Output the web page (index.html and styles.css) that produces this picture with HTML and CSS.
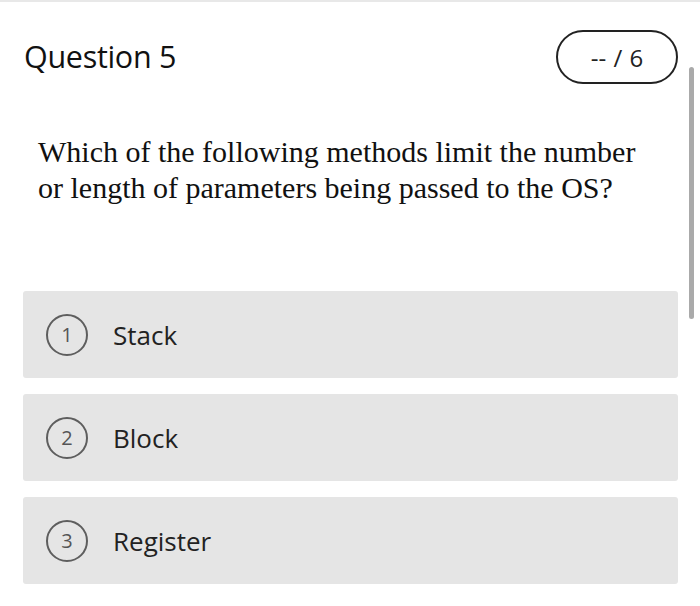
FILE: index.html
```html
<!DOCTYPE html>
<html>
<head>
<meta charset="utf-8">
<link rel="stylesheet" href="styles.css">
</head>
<body>
<div class="page">
  <header class="head">
    <h1 class="title">Question 5</h1>
    <div class="score">-- / 6</div>
  </header>
  <p class="question">Which of the following methods limit the number or length of parameters being passed to the OS?</p>
  <div class="options">
    <div class="option"><span class="num">1</span><span class="label">Stack</span></div>
    <div class="option"><span class="num">2</span><span class="label">Block</span></div>
    <div class="option"><span class="num">3</span><span class="label">Register</span></div>
  </div>
  <div class="scrollbar"></div>
</div>
</body>
</html>
```
FILE: styles.css
```css
html, body {
  margin: 0;
  padding: 0;
  background: #fff;
}
.page {
  position: relative;
  width: 700px;
  height: 606px;
  border-top: 2px solid #e8e8e8;
  box-sizing: border-box;
  padding: 28px 22px 0 23px;
  font-family: "Open Sans", "Noto Sans", sans-serif;
}
.head {
  display: flex;
  justify-content: space-between;
  align-items: center;
  height: 54px;
}
.title {
  margin: 0 0 3px 1px;
  font-size: 30.5px;
  font-weight: 400;
  color: #111;
  letter-spacing: -0.3px;
}
.score {
  width: 118px;
  height: 50px;
  border: 2px solid #222;
  border-radius: 27px;
  display: flex;
  align-items: center;
  justify-content: center;
  font-size: 24px;
  word-spacing: 1px;
  color: #222;
}
.question {
  margin: 50px 20px 0 15px;
  font-family: "Liberation Serif", "Times New Roman", serif;
  font-size: 30px;
  line-height: 36px;
  color: #111;
}
.options {
  margin-top: 85px;
  display: flex;
  flex-direction: column;
  gap: 16px;
}
.option {
  height: 87px;
  background: #e5e5e5;
  border-radius: 3px;
  display: flex;
  align-items: center;
  padding-left: 23px;
}
.num {
  width: 38px;
  height: 38px;
  border: 2px solid #5e5e5e;
  border-radius: 50%;
  display: flex;
  align-items: center;
  justify-content: center;
  font-size: 20px;
  color: #555;
  flex: none;
}
.label {
  margin-left: 25px;
  font-size: 26px;
  color: #222;
}
.scrollbar {
  position: absolute;
  left: 689px;
  top: 65px;
  width: 5px;
  height: 252px;
  border-radius: 3px;
  background: #aaa;
}
```
